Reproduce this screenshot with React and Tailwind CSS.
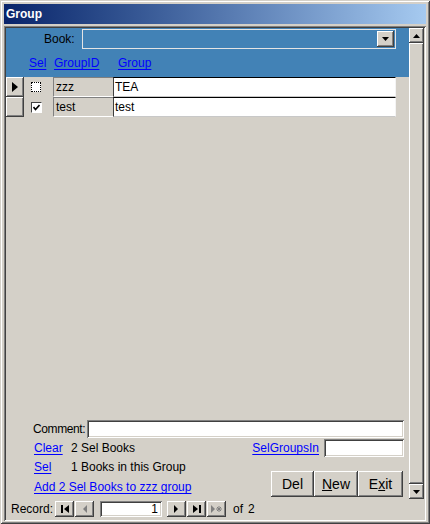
import React from 'react';

const raised = 'shadow-[inset_-1px_-1px_#404040,inset_1px_1px_#ffffff,inset_-2px_-2px_#808080,inset_2px_2px_#d4d0c8]';
const sunken = 'shadow-[inset_1px_1px_#808080,inset_-1px_-1px_#ffffff,inset_2px_2px_#404040,inset_-2px_-2px_#d4d0c8]';
const link = 'text-[#0000ff] underline underline-offset-[2px]';

function NavButton({ children }) {
  return (
    <div className={`w-[19px] h-[16px] bg-[#d4d0c8] flex items-center justify-center ${raised}`}>
      {children}
    </div>
  );
}

function Scrollbar() {
  return (
    <div className="w-[15px] flex flex-col bg-[#d4d0c8]">
      <div className={`h-[15px] flex items-center justify-center ${raised}`}>
        <svg width="7" height="4" viewBox="0 0 7 4"><path d="M3.5 0 L7 4 L0 4Z" fill="#000" /></svg>
      </div>
      <div className={`flex-1 ${raised}`} />
      <div className={`h-[15px] flex items-center justify-center ${raised}`}>
        <svg width="7" height="4" viewBox="0 0 7 4"><path d="M0 0 L7 0 L3.5 4Z" fill="#000" /></svg>
      </div>
    </div>
  );
}

function Row({ current, checked, id, name }) {
  return (
    <div className="h-[20px] flex bg-[#d4d0c8]">
      <div className={`w-[18px] h-[20px] flex items-center justify-center ${raised}`}>
        {current && (
          <svg width="6" height="10" viewBox="0 0 6 10"><path d="M0 0 L6 5 L0 10Z" fill="#000" /></svg>
        )}
      </div>
      <div className="w-[29px] flex items-center pl-[7px]">
        {checked ? (
          <div className="w-[11px] h-[11px] bg-white border-t border-l border-[#404040] border-b border-r border-b-white border-r-white flex items-center justify-center">
            <svg width="7" height="7" viewBox="0 0 7 7"><path d="M0.5 3 L2.5 5.5 L6.5 1" stroke="#000" strokeWidth="1.6" fill="none" /></svg>
          </div>
        ) : (
          <div className="w-[10px] h-[10px] bg-white border border-dotted border-black" />
        )}
      </div>
      <div className="w-[60px] border-t border-l border-t-[#808080] border-l-[#808080] border-b border-b-white flex items-center pl-[2px]">
        {id}
      </div>
      <div className="w-[283px] bg-white border-t border-l border-t-[#000] border-l-[#404040] border-r border-r-[#f4f4f4] border-b border-b-[#c8c8c8] flex items-center pl-[1px]">
        {name}
      </div>
    </div>
  );
}

export default function App() {
  return (
    <div className="w-[430px] h-[524px] bg-[#d4d0c8] p-[4px] pb-[3px] flex flex-col font-['Liberation_Sans',Arial,sans-serif] text-[12px] text-black shadow-[inset_1px_1px_#d4d0c8,inset_-1px_-1px_#404040,inset_2px_2px_#ffffff,inset_-2px_-2px_#808080] overflow-hidden">
      {/* title bar */}
      <div className="h-[20px] bg-linear-to-r from-[#0a246a] to-[#a6caf0] flex items-center px-[2px] text-white font-bold text-[12px]">
        Group
      </div>

      <div className={`mt-[2px] flex-1 flex flex-col p-[2px] ${sunken}`}>
        <div className="flex flex-1">
          <div className="flex-1 flex flex-col">
            {/* header */}
            <div className="h-[49px] bg-[#4282b6] flex flex-col">
              <div className="h-[21px] pt-[1px] flex items-center">
                <span className="ml-[38px] w-[38px]">Book:</span>
                <div className="w-[314px] h-[20px] border border-[#e4e4e4] flex justify-end p-[1px]">
                  <div className={`w-[17px] h-[16px] bg-[#d4d0c8] flex items-center justify-center ${raised}`}>
                    <svg width="7" height="4" viewBox="0 0 7 4"><path d="M0 0 L7 0 L3.5 4Z" fill="#000" /></svg>
                  </div>
                </div>
              </div>
              <div className="h-[14px] mt-[7px] flex items-center">
                <span className={`ml-[23px] w-[25px] ${link}`}>Sel</span>
                <span className={`w-[64px] ${link}`}>GroupID</span>
                <span className={link}>Group</span>
              </div>
            </div>

            <Row current checked={false} id="zzz" name="TEA" />
            <Row checked id="test" name="test" />

            <div className="flex-1" />

            {/* footer */}
            <div className="flex flex-col pr-[5px]">
              <div className="h-[18px] flex items-center">
                <span className="ml-[27px] tracking-[-0.4px]">Comment:</span>
                <div className={`ml-auto w-[317px] h-[18px] bg-white ${sunken}`} />
              </div>
              <div className="h-[18px] mt-[1px] flex items-center">
                <span className={`ml-[28px] w-[37px] ${link}`}>Clear</span>
                <span>2 Sel Books</span>
                <span className={`ml-auto mr-[5px] ${link}`}>SelGroupsIn</span>
                <div className={`w-[80px] h-[18px] bg-white ${sunken}`} />
              </div>
              <div className="h-[42px] flex">
                <div className="flex flex-col">
                  <div className="h-[20px] flex items-center">
                    <span className={`ml-[28px] w-[37px] ${link}`}>Sel</span>
                    <span>1 Books in this Group</span>
                  </div>
                  <div className="h-[20px] flex items-center">
                    <span className={`ml-[28px] ${link}`}>Add 2 Sel Books to zzz group</span>
                  </div>
                </div>
                <div className="ml-auto mr-[1px] mt-[14px] flex h-[26px] text-[14px]">
                  <div className={`w-[43px] flex items-center justify-center bg-[#d4d0c8] ${raised}`}>Del</div>
                  <div className={`w-[44px] flex items-center justify-center bg-[#d4d0c8] ${raised}`}>
                    <span><span className="underline">N</span>ew</span>
                  </div>
                  <div className={`w-[45px] flex items-center justify-center bg-[#d4d0c8] ${raised}`}>
                    <span>E<span className="underline">x</span>it</span>
                  </div>
                </div>
              </div>
            </div>
          </div>
          <Scrollbar />
        </div>

        {/* record navigation */}
        <div className="h-[20px] flex items-center text-[12px]">
          <span className="ml-[5px] w-[44px]">Record:</span>
          <div className="flex gap-[1px]">
            <NavButton>
              <svg width="8" height="8" viewBox="0 0 8 8"><rect x="0" y="0" width="2" height="8" fill="#000" /><path d="M8 0 L3 4 L8 8Z" fill="#000" /></svg>
            </NavButton>
            <NavButton>
              <svg width="5" height="8" viewBox="0 0 5 8"><path d="M5 0 L1 4 L5 8Z" fill="#808080" /></svg>
            </NavButton>
          </div>
          <div className={`ml-[6px] w-[62px] h-[16px] bg-white flex items-center justify-end pr-[4px] ${sunken}`}>1</div>
          <div className="ml-[5px] flex gap-[1px]">
            <NavButton>
              <svg width="5" height="8" viewBox="0 0 5 8"><path d="M0 0 L4 4 L0 8Z" fill="#000" /></svg>
            </NavButton>
            <NavButton>
              <svg width="8" height="8" viewBox="0 0 8 8"><path d="M0 0 L5 4 L0 8Z" fill="#000" /><rect x="6" y="0" width="2" height="8" fill="#000" /></svg>
            </NavButton>
            <NavButton>
              <svg width="11" height="8" viewBox="0 0 11 8"><path d="M0 0 L4 4 L0 8Z" fill="#808080" /><path d="M8 1 V7 M5 4 H11 M6 2 L10 6 M10 2 L6 6" stroke="#808080" strokeWidth="1" /></svg>
            </NavButton>
          </div>
          <span className="ml-[7px]">of</span>
          <span className="ml-[5px]">2</span>
        </div>
      </div>
    </div>
  );
}
